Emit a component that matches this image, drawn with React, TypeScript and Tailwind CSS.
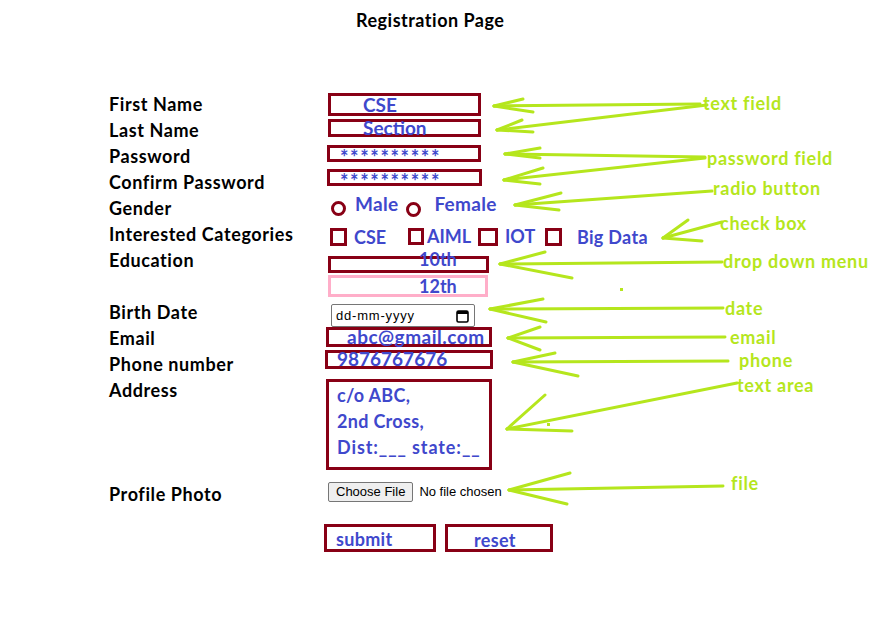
import React from "react";

const RED = "border-[#880015]";

function Row({ label, children, h = "h-[26px]", className = "" }: { label?: string; children?: React.ReactNode; h?: string; className?: string }) {
  return (
    <div className={`flex items-start ${h} ${className}`}>
      <div className="w-[216px] shrink-0 h-[26px] leading-[26px] text-[18px] tracking-[0.6px] font-bold text-black">{label}</div>
      <div className="relative flex-1 h-full">{children}</div>
    </div>
  );
}

const blue = "text-[#3F48CC] font-bold";

export default function App() {
  const arrows: [number, number, number, number, number, number, number, number][] = [
    [494, 106, 700, 104, 523, 99, 533, 112],
    [497, 130, 707, 105, 522, 120, 533, 132],
    [505, 154, 705, 157, 540, 148, 540, 158],
    [504, 180, 705, 158, 543, 168, 540, 184],
    [515, 205, 712, 191, 561, 193, 559, 210],
    [663, 238, 722, 222, 688, 220, 702, 241],
    [500, 264, 722, 262, 545, 252, 572, 278],
    [490, 309, 723, 308, 543, 299, 546, 322],
    [508, 338, 725, 337, 540, 327, 540, 350],
    [513, 362, 728, 361, 555, 353, 578, 376],
    [507, 429, 737, 383, 545, 395, 572, 431],
    [509, 490, 723, 486, 570, 473, 567, 504],
  ];
  const notes: [string, number, number][] = [
    ["text field", 703, 103],
    ["password field", 707, 158],
    ["radio button", 713, 188],
    ["check box", 720, 223],
    ["drop down menu", 723, 261],
    ["date", 725, 308],
    ["email", 730, 337],
    ["phone", 739, 360],
    ["text area", 737, 385],
    ["file", 731, 483],
  ];
  return (
    <div className="relative w-[877px] h-[621px] bg-white overflow-hidden" style={{ fontFamily: "Lato, 'Open Sans', sans-serif" }}>
      <div className="pt-[8px] pl-[356px] text-[18px] tracking-[0.5px] font-bold leading-[24px] text-black">Registration Page</div>

      <div className="mt-[59px] pl-[109px] flex flex-col">
        <Row label="First Name">
          <div className={`absolute left-[3px] top-[2px] w-[153px] h-[23px] border-[3px] ${RED} flex items-center pl-[32px] text-[19px] leading-none ${blue}`}>CSE</div>
        </Row>
        <Row label="Last Name">
          <div className={`absolute left-[3px] top-[2px] w-[153px] h-[18px] border-[3px] ${RED} flex items-center pl-[32px] text-[19px] leading-none ${blue}`}>
            <span className="-translate-y-[1px]">Section</span>
          </div>
        </Row>
        <Row label="Password">
          <div className={`absolute left-[2px] top-[2px] w-[154px] h-[17px] border-[3px] ${RED} flex items-start pl-[10px] text-[20px] leading-[18px] tracking-[1.6px] ${blue}`}>**********</div>
        </Row>
        <Row label="Confirm Password">
          <div className={`absolute left-[2px] top-[0px] w-[155px] h-[17px] border-[3px] ${RED} flex items-start pl-[10px] text-[20px] leading-[18px] tracking-[1.6px] ${blue}`}>**********</div>
        </Row>
        <Row label="Gender">
          <div className="absolute left-0 top-0 w-[300px] h-[26px] flex items-start">
            <span className={`mt-[6px] ml-[6px] w-[15px] h-[15px] rounded-full border-[3px] ${RED}`} />
            <span className={`ml-[9px] text-[19px] leading-[18px] tracking-[0.3px] ${blue}`}>Male</span>
            <span className={`mt-[7px] ml-[8px] w-[15px] h-[15px] rounded-full border-[3px] ${RED}`} />
            <span className={`ml-[13px] text-[19px] leading-[18px] tracking-[0.3px] ${blue}`}>Female</span>
          </div>
        </Row>
        <Row label="Interested Categories">
          <div className="absolute left-0 top-0 w-[400px] h-[26px]">
            <span className={`absolute left-[5px] top-[7px] w-[17px] h-[18px] border-[3px] ${RED}`} />
            <span className={`absolute left-[29px] top-[6px] text-[18px] leading-[20px] ${blue}`}>CSE</span>
            <span className={`absolute left-[83px] top-[7px] w-[16px] h-[17px] border-[3px] ${RED}`} />
            <span className={`absolute left-[102px] top-[5px] text-[18px] leading-[20px] ${blue}`}>AIML</span>
            <span className={`absolute left-[153px] top-[7px] w-[20px] h-[18px] border-[3px] ${RED}`} />
            <span className={`absolute left-[180px] top-[5px] text-[18px] leading-[20px] ${blue}`}>IOT</span>
            <span className={`absolute left-[220px] top-[7px] w-[17px] h-[18px] border-[3px] ${RED}`} />
            <span className={`absolute left-[252px] top-[6px] text-[18px] leading-[20px] tracking-[0.3px] ${blue}`}>Big Data</span>
          </div>
        </Row>
        <Row label="Education">
          <div className={`absolute left-[3px] top-[9px] w-[161px] h-[17px] border-[3px] ${RED}`} />
          <div className={`absolute left-[94px] top-[2px] text-[18px] leading-[20px] ${blue}`}>10th</div>
        </Row>
        <Row>
          <div className={`absolute left-[3px] top-[2px] w-[160px] h-[22px] border-[3px] border-[#FFAEC9] flex items-center pl-[88px] text-[18px] leading-none ${blue}`}>12th</div>
        </Row>
        <Row label="Birth Date">
          <div className="absolute left-[6px] top-[5px] w-[144px] h-[23px] border border-[#767676] rounded-[2px] bg-white flex items-center pl-[4px] pr-[5px] text-[13px] text-black" style={{ fontFamily: "Arial, 'Liberation Sans', sans-serif" }}>
            <span className="flex-1 tracking-[0.8px]">dd-mm-yyyy</span>
            <svg width="13" height="14" viewBox="0 0 13 14">
              <rect x="1" y="2" width="11" height="11" rx="1.5" fill="none" stroke="#000" strokeWidth="1.6" />
              <rect x="1" y="2" width="11" height="3" fill="#000" />
            </svg>
          </div>
        </Row>
        <Row label="Email">
          <div className={`absolute left-[1px] top-[2px] w-[166px] h-[20px] border-[3px] ${RED} flex items-center pl-[18px] text-[19px] leading-none tracking-[0.5px] ${blue}`}>
            <span className="-translate-y-[1px]">abc@gmail.com</span>
          </div>
        </Row>
        <Row label="Phone number">
          <div className={`absolute left-0 top-[-1px] w-[168px] h-[19px] border-[3px] ${RED} flex items-center pl-[9px] text-[19px] leading-none ${blue}`}>
            <span className="-translate-y-[1px]">9876767676</span>
          </div>
        </Row>
        <Row label="Address" h="h-[95px]">
          <div className={`absolute left-[1px] top-[2px] w-[166px] h-[91px] border-[3px] ${RED} pl-[8px] pt-[0px] text-[18px] leading-[26px] tracking-[0.3px] ${blue}`}>
            <div>c/o ABC,</div>
            <div>2nd Cross,</div>
            <div className="tracking-[0.9px]">Dist:___ state:__</div>
          </div>
        </Row>
        <Row label="Profile Photo" className="mt-[9px]">
          <div className="absolute left-[3px] top-[1px] flex items-center text-[13px] text-black" style={{ fontFamily: "Arial, 'Liberation Sans', sans-serif" }}>
            <span className="h-[20px] px-[7px] flex items-center bg-[#efefef] border border-[#767676] rounded-[2px]">Choose File</span>
            <span className="ml-[6px]">No file chosen</span>
          </div>
        </Row>
        <div className="flex mt-[17px] pl-[215px]">
          <div className={`w-[112px] h-[28px] border-[3px] ${RED} pl-[9px] text-[18px] leading-[24px] tracking-[0.3px] ${blue}`}>submit</div>
          <div className={`ml-[9px] w-[108px] h-[28px] border-[3px] ${RED} pl-[26px] text-[18px] leading-[26px] tracking-[0.3px] ${blue}`}>reset</div>
        </div>
      </div>

      <svg className="absolute inset-0 pointer-events-none" width="877" height="621">
        <g stroke="#B5E61D" strokeWidth="3" strokeLinecap="round" fill="none">
          {arrows.map((a, i) => (
            <g key={i}>
              <line x1={a[0]} y1={a[1]} x2={a[2]} y2={a[3]} />
              <line x1={a[0]} y1={a[1]} x2={a[4]} y2={a[5]} />
              <line x1={a[0]} y1={a[1]} x2={a[6]} y2={a[7]} />
            </g>
          ))}
        </g>
        <rect x="620" y="288" width="3" height="3" fill="#B5E61D" />
        <rect x="547" y="423" width="3" height="3" fill="#B5E61D" />
      </svg>
      {notes.map(([t, x, y]) => (
        <div key={t} className="absolute text-[18px] tracking-[0.7px] font-bold text-[#B5E61D] leading-[16px] whitespace-nowrap" style={{ left: x, top: y - 8 }}>
          {t}
        </div>
      ))}
    </div>
  );
}
